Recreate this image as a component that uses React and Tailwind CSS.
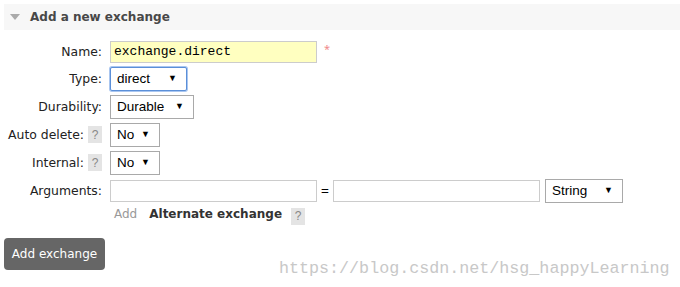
import React from 'react';

const LABEL = 'font-["DejaVu_Sans",Verdana,sans-serif] text-[12.4px] text-[#222]';
const ARIAL = 'font-["Liberation_Sans",Arial,sans-serif] text-[13.5px] text-black';

function Help() {
  return (
    <span className="inline-flex h-[17px] w-[14px] items-center justify-center bg-[#e4e4e4] font-['Liberation_Sans',Arial,sans-serif] text-[12px] text-[#888]">
      ?
    </span>
  );
}

function Select({ value, width, focused }) {
  return (
    <div
      className={`flex h-[24px] items-center justify-between border bg-white pl-[6px] pr-[9px] ${ARIAL} ${
        focused ? 'rounded-[2px] border-[#5b8fd8] shadow-[0_0_0_1px_#a9c6f0]' : 'border-[#a9a9a9]'
      }`}
      style={{ width }}
    >
      <span>{value}</span>
      <span className="text-[9px]">▼</span>
    </div>
  );
}

function Row({ label, help, children }) {
  return (
    <div className="flex items-center">
      <div className={`flex w-[102px] items-center justify-end gap-[4px] ${LABEL}`}>
        <span>{label}</span>
        {help && <Help />}
      </div>
      <div className="ml-[8px] flex items-center">{children}</div>
    </div>
  );
}

export default function App() {
  return (
    <div className="relative h-[287px] w-[680px] overflow-hidden bg-white">
      <div className="pt-[4px] pl-[4px]">
        <div className="flex h-[26px] items-center bg-[#f7f7f7] pl-[6px]">
          <svg width="10" height="6" viewBox="0 0 10 6" className="mr-[10px]">
            <path d="M0 0 H10 L5 6 Z" fill="#aaa" />
          </svg>
          <span className="font-['DejaVu_Sans',Verdana,sans-serif] text-[12px] font-bold text-[#484848]">
            Add a new exchange
          </span>
        </div>
      </div>

      <div className="mt-[11px] flex flex-col gap-[4px]">
        <Row label="Name:">
          <div className="flex h-[22px] w-[207px] items-center border border-[#ccc] bg-[#ffffc0] px-[3px] font-['Liberation_Mono','Courier_New',monospace] text-[13px] text-black">
            exchange.direct
          </div>
          <span className="ml-[7px] -mt-[6px] text-[11px] text-[#f08a8a]">*</span>
        </Row>
        <Row label="Type:">
          <Select value="direct" width={77} focused />
        </Row>
        <Row label="Durability:">
          <Select value="Durable" width={84} />
        </Row>
        <Row label="Auto delete:" help>
          <Select value="No" width={50} />
        </Row>
        <Row label="Internal:" help>
          <Select value="No" width={50} />
        </Row>
        <Row label="Arguments:">
          <div className="h-[22px] w-[207px] border border-[#ccc] bg-white" />
          <span className={`mx-[4px] ${ARIAL}`}>=</span>
          <div className="h-[22px] w-[207px] border border-[#ccc] bg-white" />
          <div className="ml-[5px]">
            <Select value="String" width={78} />
          </div>
        </Row>
      </div>

      <div className="-mt-[1px] ml-[114px] flex items-center">
        <span className="font-['DejaVu_Sans',Verdana,sans-serif] text-[12px] text-[#999]">Add</span>
        <span className="ml-[12px] font-['DejaVu_Sans',Verdana,sans-serif] text-[12px] font-bold text-[#333]">
          Alternate exchange
        </span>
        <span className="ml-[9px]">
          <Help />
        </span>
      </div>

      <div className="ml-[4px] mt-[12px]">
        <button className="h-[32px] w-[101px] rounded-[4px] bg-[#666] font-['DejaVu_Sans',Verdana,sans-serif] text-[12px] text-white">
          Add exchange
        </button>
      </div>

      <div className="absolute left-[279px] top-[256px] font-['Liberation_Mono','Courier_New',monospace] text-[16.7px] text-[#c8c8c8]">
        https://blog.csdn.net/hsg_happyLearning
      </div>
    </div>
  );
}
